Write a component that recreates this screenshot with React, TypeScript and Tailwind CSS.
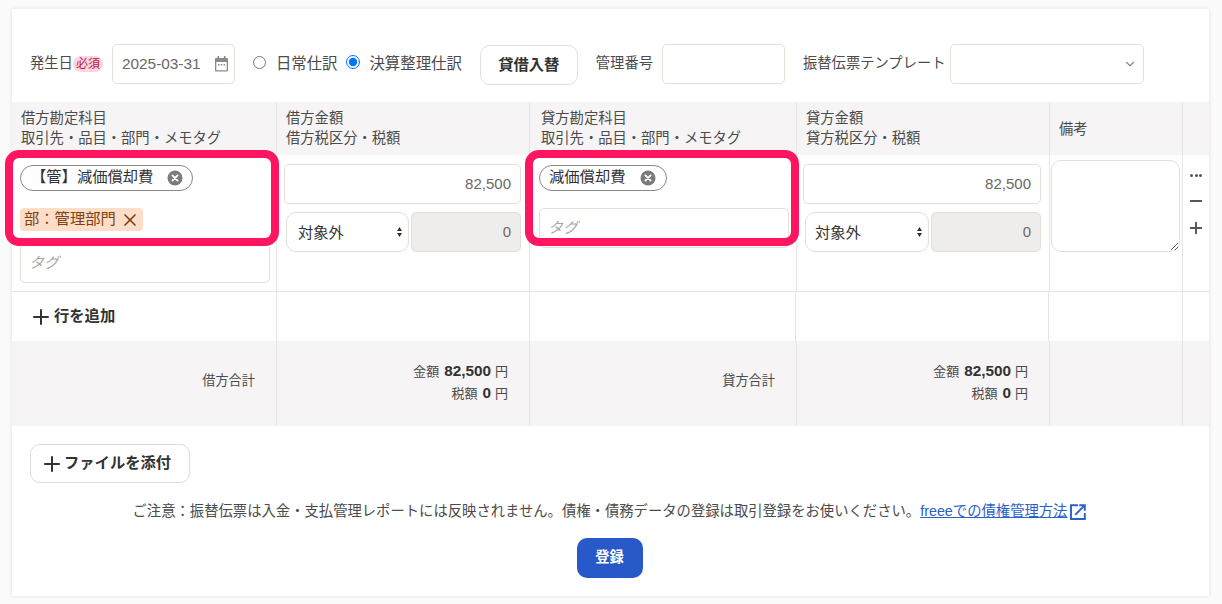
import { Plus, X, Minus, ChevronDown } from "lucide-react";

const font = "[font-family:'Liberation_Sans','Noto_Sans_CJK_JP',sans-serif]";

function ClearIcon() {
  return (
    <svg viewBox="0 0 16 16" className="w-4 h-4 shrink-0">
      <circle cx="8" cy="8" r="7.5" fill="#7b7b7b" />
      <path d="M5.4 5.4l5.2 5.2M10.6 5.4l-5.2 5.2" stroke="#fff" strokeWidth="1.8" strokeLinecap="round" />
    </svg>
  );
}

function CalendarIcon() {
  return (
    <svg viewBox="0 0 13 16" className="w-[13px] h-4 shrink-0" fill="#8a8a8a">
      <rect x="2.5" y="0" width="1.6" height="3" />
      <rect x="8.9" y="0" width="1.6" height="3" />
      <path d="M1 2h11a1 1 0 0 1 1 1v11.5a1 1 0 0 1-1 1H1a1 1 0 0 1-1-1V3a1 1 0 0 1 1-1zM1.3 6v8.2h10.4V6z" fillRule="evenodd" />
      <rect x="3" y="8" width="1.5" height="1.5" />
      <rect x="5.8" y="8" width="1.5" height="1.5" />
      <rect x="8.6" y="8" width="1.5" height="1.5" />
    </svg>
  );
}

function ExternalIcon() {
  return (
    <svg viewBox="0 0 16 16" className="ml-[3px] w-4 h-4 shrink-0" fill="none" stroke="#2b5fc9" strokeWidth="1.9">
      <path d="M8 1.2H1v13.8h13.8V9" />
      <path d="M5.2 10.8L14 2" />
      <path d="M9.2 1.2h5.6v5.6" />
    </svg>
  );
}

function AccountPill({ label, className }: { label: string; className: string }) {
  return (
    <div className={`flex items-center justify-between h-[26px] border border-[#8c8a88] rounded-full bg-white text-[15.3px] text-[#323232] ${className}`}>
      <span className="pb-[2px]">{label}</span>
      <ClearIcon />
    </div>
  );
}

function TagInput({ className }: { className: string }) {
  return (
    <input
      placeholder="タグ"
      className={`block h-10 pl-2 pr-[9px] pb-[2px] bg-white border border-[#e3e0da] rounded-[5px] text-[15px] placeholder:text-[#a9a7a5] placeholder:italic ${className}`}
    />
  );
}

function AmountCell({ className, selectClass }: { className: string; selectClass: string }) {
  return (
    <div className={`flex flex-col pt-[9px] pr-2 border-r border-[#e5e5e5] ${className}`}>
      <input
        readOnly
        value="82,500"
        className="h-10 w-full px-[9px] pb-[2px] text-right text-[15px] text-[#6a6865] bg-white border border-[#e3e0da] rounded-[5px]"
      />
      <div className="flex gap-[2px] mt-2 pl-[2px]">
        <div className={`relative h-10 ${selectClass}`}>
          <select defaultValue="対象外" className="appearance-none h-10 w-full pt-[2px] pr-4 text-[15.3px] text-[#323232] bg-white border border-[#e3e0da] rounded-[10px]">
            <option>対象外</option>
          </select>
          <svg viewBox="0 0 5 10" className="absolute right-[7px] top-[15px] w-[5px] h-[10px]" fill="#333">
            <path d="M2.5 0L5 4H0zM2.5 10L0 6h5z" />
          </svg>
        </div>
        <input
          readOnly
          value="0"
          className="h-10 flex-1 min-w-0 px-[9px] pb-[2px] text-right text-[15px] text-[#6a6865] bg-[#eeedeb] border border-[#e3e0da] rounded-[5px]"
        />
      </div>
    </div>
  );
}

function HeaderCell({ lines, className = "pl-[9px] pb-[2px]" }: { lines: string[]; className?: string }) {
  return (
    <div className={`flex flex-col justify-center h-[53px] bg-[#f6f4f5] border-r border-[#e5e5e5] leading-5 ${className}`}>
      {lines.map((l) => (
        <span key={l}>{l}</span>
      ))}
    </div>
  );
}

function TotalCell({ amount, tax }: { amount: string; tax: string }) {
  return (
    <div className="flex flex-col justify-center items-end h-[85px] pb-[4px] pr-[21px] bg-[#f6f4f5] border-r border-[#e5e5e5] text-[13px] leading-[21px] text-[#4b4b4b]">
      <div className="flex items-baseline gap-[5px]">
        金額 <b className="-mr-[1px] text-[15.3px] text-[#323232]">{amount}</b> 円
      </div>
      <div className="flex items-baseline gap-[5px]">
        税額 <b className="-mr-[1px] text-[15.3px] text-[#323232]">{tax}</b> 円
      </div>
    </div>
  );
}

function TotalLabel({ label }: { label: string }) {
  return (
    <div className="flex items-center justify-end h-[85px] pb-[5px] pr-[21px] bg-[#f6f4f5] border-r border-[#e5e5e5] text-[13.2px] text-[#4b4b4b]">
      {label}
    </div>
  );
}

const cols = "grid grid-cols-[265px_253px_267px_253px_133px_1fr]";

export default function App() {
  return (
    <div className={`relative h-[604px] w-[1222px] overflow-hidden bg-[#fbfbfb] ${font} text-[14.3px] text-[#4b4b4b]`}>
      <div className="absolute left-3 top-[9px] w-[1197px] h-[587px] bg-white shadow-[0_0_4px_rgba(0,0,0,0.12)]">
        {/* top form row */}
        <div className="flex items-center h-[93px] pt-[17px] pl-[18px]">
          <span>発生日</span>
          <span className="flex items-center justify-center w-[30px] h-4 rounded-full bg-[#fbd5df] text-[#b11d4d] text-[12px]">必須</span>
          <div className="flex items-center justify-between ml-[9px] w-[123px] h-10 pl-[9px] pr-[6px] border border-[#e3e0da] rounded-[5px] text-[15.4px] text-[#6a6865]">
            <span>2025-03-31</span>
            <CalendarIcon />
          </div>
          <input type="radio" name="kind" className="ml-[18px] mb-1 w-[13px] h-[13px]" />
          <label className="ml-[10px] text-[15.4px]">日常仕訳</label>
          <input type="radio" name="kind" defaultChecked className="ml-[9px] mb-1 w-[14px] h-[14px]" />
          <label className="ml-[9px] text-[15.4px]">決算整理仕訳</label>
          <button className="ml-[18px] w-[98px] h-10 mt-[2px] border border-[#e3e0da] rounded-[10px] text-[15.3px] font-bold text-[#323232]">
            貸借入替
          </button>
          <span className="ml-[18px]">管理番号</span>
          <input className="ml-[9px] w-[123px] h-10 border border-[#e3e0da] rounded-[5px]" />
          <span className="ml-[18px]">振替伝票テンプレート</span>
          <div className="flex items-center justify-end ml-1 w-[194px] h-10 pr-[6px] border border-[#e3e0da] rounded-[5px]">
            <ChevronDown className="w-[14px] h-[14px] text-[#8a8a8a]" />
          </div>
        </div>

        {/* header */}
        <div className={cols}>
          <HeaderCell lines={["借方勘定科目", "取引先・品目・部門・メモタグ"]} />
          <HeaderCell lines={["借方金額", "借方税区分・税額"]} />
          <HeaderCell lines={["貸方勘定科目", "取引先・品目・部門・メモタグ"]} className="pl-[11px] pb-[2px]" />
          <HeaderCell lines={["貸方金額", "貸方税区分・税額"]} />
          <HeaderCell lines={["備考"]} className="pl-[9px]" />
          <div className="bg-[#f6f4f5]" />
        </div>

        {/* entry row */}
        <div className={`${cols} h-[137px] border-b border-[#e5e5e5]`}>
          <div className="flex flex-col pt-[10px] pl-2 border-r border-[#e5e5e5]">
            <AccountPill label="【管】減価償却費" className="w-[173px] pl-[10px] pr-[9px]" />
            <div className="flex items-center self-start gap-1 mt-[17px] h-[23px] pl-1 pr-[3px] rounded-[4px] bg-[#fddcc8] text-[15.3px] text-[#7c4310]">
              部：管理部門
              <X className="w-5 h-5" strokeWidth={2} />
            </div>
            <TagInput className="mt-3 w-[250px]" />
          </div>
          <AmountCell className="pl-[7px]" selectClass="w-[123px] [&>select]:pl-[11px]" />
          <div className="flex flex-col pt-[10px] pl-[9px] border-r border-[#e5e5e5]">
            <AccountPill label="減価償却費" className="w-[128px] pl-[9px] pr-[10px]" />
            <TagInput className="mt-[17px] w-[250px]" />
          </div>
          <AmountCell className="pl-[6px]" selectClass="w-[124px] [&>select]:pl-[9px]" />
          <div className="pt-[5px] pl-[1px] border-r border-[#e5e5e5]">
            <textarea className="block w-[129px] h-[92px] bg-white border border-[#e3e0da] rounded-[10px]" />
          </div>
          <div className="flex flex-col items-center pt-[10px] text-[#555]">
            <div className="flex gap-[1.5px] h-5 items-center">
              <span className="w-[3px] h-[3px] rounded-full bg-[#555]" />
              <span className="w-[3px] h-[3px] rounded-full bg-[#555]" />
              <span className="w-[3px] h-[3px] rounded-full bg-[#555]" />
            </div>
            <Minus className="mt-[7px] w-[18px] h-[18px]" strokeWidth={2.6} />
            <Plus className="mt-[9px] w-[18px] h-[18px]" strokeWidth={2.6} />
          </div>
        </div>

        {/* add row */}
        <div className="grid grid-cols-[265px_253px_266px_253px_134px_1fr] h-[49px]">
          <div className="flex items-center pl-[17px] border-r border-[#e5e5e5] text-[15.3px] font-bold text-[#323232]">
            <Plus className="w-6 h-6" strokeWidth={2} />
            <span className="ml-[1px]">行を追加</span>
          </div>
          <div className="border-r border-[#e5e5e5]" />
          <div className="border-r border-[#e5e5e5]" />
          <div className="border-r border-[#e5e5e5]" />
          <div className="border-r border-[#e5e5e5]" />
          <div />
        </div>

        {/* totals */}
        <div className={cols}>
          <TotalLabel label="借方合計" />
          <TotalCell amount="82,500" tax="0" />
          <TotalLabel label="貸方合計" />
          <TotalCell amount="82,500" tax="0" />
          <div className="bg-[#f6f4f5] border-r border-[#e5e5e5]" />
          <div className="bg-[#f6f4f5]" />
        </div>

        {/* footer */}
        <div className="flex flex-col">
          <button className="flex items-center self-start ml-[18px] mt-[18px] h-[39px] w-40 pl-[9px] border border-[#dcdcdc] rounded-[10px] text-[15.3px] font-bold text-[#323232]">
            <Plus className="w-6 h-6" strokeWidth={2} />
            <span>ファイルを添付</span>
          </button>
          <p className="flex items-center justify-center mt-[19px] mr-[2px] h-5 text-[14.33px]">
            ご注意：振替伝票は入金・支払管理レポートには反映されません。債権・債務データの登録は取引登録をお使いください。
            <a className="text-[#2b5fc9] underline">freeeでの債権管理方法</a>
            <ExternalIcon />
          </p>
          <button className="self-center mt-4 mr-[2px] w-[66px] h-10 rounded-[10px] bg-[#2859c8] text-white text-[14.3px] font-bold">
            登録
          </button>
        </div>
      </div>

      {/* annotation frames */}
      <div className="absolute left-[5px] top-[150px] w-[274px] h-[96px] border-[8px] border-[#ff1560] rounded-[14px]" />
      <div className="absolute left-[525px] top-[150px] w-[274px] h-[96px] border-[8px] border-[#ff1560] rounded-[14px]" />
    </div>
  );
}
